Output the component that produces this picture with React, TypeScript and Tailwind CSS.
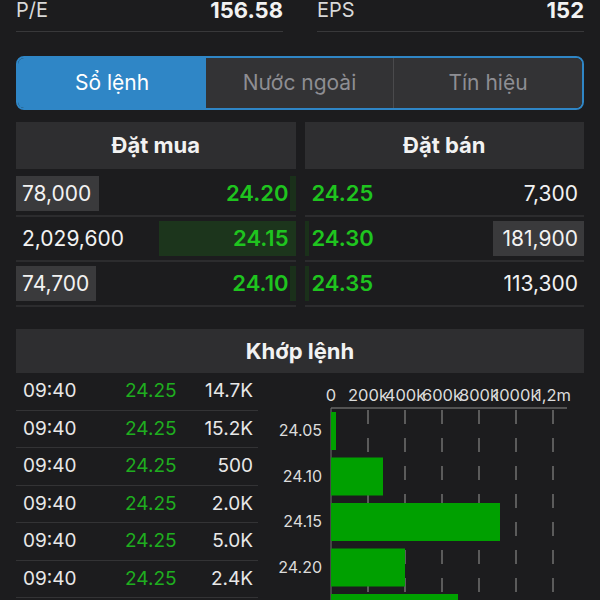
import React from 'react';

const bids = [
  { vol: '78,000', volBox: 'w-[83px] bg-[#3a3a3c]', price: '24.20', priceCell: 'bg-[linear-gradient(to_left,#1a301a_6px,transparent_6px)]' },
  { vol: '2,029,600', volBox: '', price: '24.15', priceCell: 'w-[137px] bg-[#1c351c]' },
  { vol: '74,700', volBox: 'w-[80px] bg-[#3a3a3c]', price: '24.10', priceCell: 'bg-[linear-gradient(to_left,#1a301a_6px,transparent_6px)]' },
];

const asks = [
  { price: '24.25', priceCell: '', vol: '7,300', volBox: '' },
  { price: '24.30', priceCell: 'bg-[linear-gradient(to_right,#1a301a_4px,transparent_4px)]', vol: '181,900', volBox: 'w-[91px] bg-[#3a3a3c]' },
  { price: '24.35', priceCell: 'bg-[linear-gradient(to_right,#1a301a_4px,transparent_4px)]', vol: '113,300', volBox: '' },
];

const trades = [
  { time: '09:40', price: '24.25', vol: '14.7K' },
  { time: '09:40', price: '24.25', vol: '15.2K' },
  { time: '09:40', price: '24.25', vol: '500' },
  { time: '09:40', price: '24.25', vol: '2.0K' },
  { time: '09:40', price: '24.25', vol: '5.0K' },
  { time: '09:40', price: '24.25', vol: '2.4K' },
];

const ticks = ['0', '200k', '400k', '600k', '800k', '1000k', '1,2m'];
const bars = [
  { label: '24.05', w: 5 },
  { label: '24.10', w: 52 },
  { label: '24.15', w: 169 },
  { label: '24.20', w: 74 },
  { label: '24.25', w: 127 },
];

// biểu đồ khối lượng theo giá
const VolumeChart: React.FC = () => {
  const x0 = 61;
  const step = 37;
  return (
    <svg width="314" height="240" className="block">
      {ticks.map((t, i) => (
        <text key={t} x={x0 + i * step} y={28} fill="#dcdcdc" fontSize="16.5" textAnchor="middle" fontFamily="Inter, sans-serif">
          {t}
        </text>
      ))}
      <line x1={x0} y1={35} x2={297} y2={35} stroke="#666" strokeWidth="1.5" />
      {ticks.slice(1).map((t, i) => (
        <line
          key={t}
          x1={x0 + (i + 1) * step}
          y1={37}
          x2={x0 + (i + 1) * step}
          y2={240}
          stroke="#707070"
          strokeWidth="1.5"
          strokeDasharray="14 14"
        />
      ))}
      <line x1={x0} y1={35} x2={x0} y2={240} stroke="#707070" strokeWidth="1" />
      {bars.map((b, i) => {
        const y = 39 + i * 45.5;
        return (
          <g key={b.label}>
            <rect x={x0} y={y} width={b.w} height={38} fill="#00a000" />
            <text x={52} y={y + 24} fill="#dcdcdc" fontSize="16" textAnchor="end" fontFamily="Inter, sans-serif">
              {b.label}
            </text>
          </g>
        );
      })}
    </svg>
  );
};

export default function App() {
  return (
    <div className="w-[600px] h-[600px] overflow-hidden bg-[#1c1c1e] px-4 font-['Inter',sans-serif] text-[#f2f2f2]">
      {/* P/E, EPS */}
      <div className="grid grid-cols-2 gap-[34px]">
        <div className="border-b border-[#38383a] h-[32px] flex items-start justify-between">
          <span className="text-[20px] leading-[21px] text-[#d8d8d8]">P/E</span>
          <span className="text-[22px] leading-[21px] font-bold">156.58</span>
        </div>
        <div className="border-b border-[#38383a] h-[32px] flex items-start justify-between">
          <span className="text-[20px] leading-[21px] text-[#d8d8d8]">EPS</span>
          <span className="text-[22px] leading-[21px] font-bold">152</span>
        </div>
      </div>

      {/* tabs */}
      <div className="mt-[24px] h-[54px] grid grid-cols-3 rounded-lg border-2 border-[#2f86c6] overflow-hidden text-[21px]">
        <div className="bg-[#2f86c6] flex items-center justify-center text-white">Sổ lệnh</div>
        <div className="bg-[#333335] flex items-center justify-center text-[#8e8e93] border-r border-[#4a4a4c]">Nước ngoài</div>
        <div className="bg-[#333335] flex items-center justify-center text-[#8e8e93]">Tín hiệu</div>
      </div>

      {/* order book */}
      <div className="mt-3 grid grid-cols-2 gap-[9px]">
        <div>
          <div className="h-[47px] bg-[#2e2e30] flex items-center justify-center text-[22px] font-bold">Đặt mua</div>
          <div className="pt-[3px]">
            {bids.map((r) => (
              <div key={r.price} className="h-[45px] py-1 border-b-2 border-[#2c2c2e] flex items-stretch text-[21px]">
                <div className={`h-full flex items-center px-[6px] ${r.volBox}`}>{r.vol}</div>
                <div className={`ml-auto h-full flex items-center justify-end pr-[7px] text-[22px] font-semibold text-[#1fc41f] ${r.priceCell}`}>
                  {r.price}
                </div>
              </div>
            ))}
          </div>
        </div>
        <div>
          <div className="h-[47px] bg-[#2e2e30] flex items-center justify-center text-[22px] font-bold">Đặt bán</div>
          <div className="pt-[3px]">
            {asks.map((r) => (
              <div key={r.price} className="h-[45px] py-1 border-b-2 border-[#2c2c2e] flex items-stretch text-[21px]">
                <div className={`h-full flex items-center pl-[7px] pr-2 text-[22px] font-semibold text-[#1fc41f] ${r.priceCell}`}>{r.price}</div>
                <div className={`ml-auto h-full flex items-center justify-end pr-[6px] ${r.volBox}`}>{r.vol}</div>
              </div>
            ))}
          </div>
        </div>
      </div>

      {/* matched orders */}
      <div className="mt-[22px] h-[44px] bg-[#2e2e30] flex items-center justify-center text-[22px] font-bold">Khớp lệnh</div>
      <div className="flex">
        <div className="w-[242px]">
          {trades.map((t, i) => (
            <div key={i} className="h-[37.5px] border-b border-[#333335] flex items-center text-[19px]">
              <span className="w-[109px] pl-[7px] text-[#e8e8e8]">{t.time}</span>
              <span className="text-[#1fae1f]">{t.price}</span>
              <span className="ml-auto pr-[5px] text-[#e8e8e8]">{t.vol}</span>
            </div>
          ))}
        </div>
        <div className="ml-3">
          <VolumeChart />
        </div>
      </div>
    </div>
  );
}
